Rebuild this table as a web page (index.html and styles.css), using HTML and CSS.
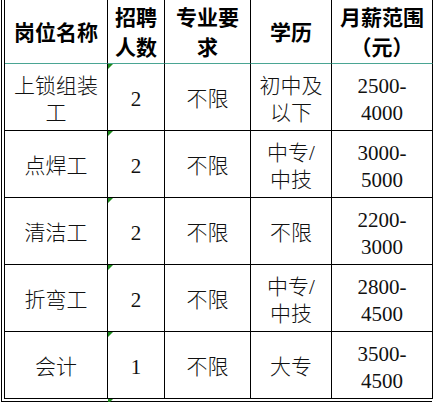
FILE: index.html
```html
<!DOCTYPE html>
<html lang="zh-CN">
<head>
<meta charset="utf-8">
<link rel="stylesheet" href="styles.css">
</head>
<body>
<div class="frame">
  <div class="grid">
    <div class="cell head">岗位名称</div>
    <div class="cell head">招聘<br>人数</div>
    <div class="cell head">专业要<br>求</div>
    <div class="cell head">学历</div>
    <div class="cell head">月薪范围<br>（元）</div>

    <div class="cell">上锁组装<br>工</div>
    <div class="cell mark">2</div>
    <div class="cell">不限</div>
    <div class="cell">初中及<br>以下</div>
    <div class="cell">2500-<br>4000</div>

    <div class="cell">点焊工</div>
    <div class="cell mark">2</div>
    <div class="cell">不限</div>
    <div class="cell">中专/<br>中技</div>
    <div class="cell">3000-<br>5000</div>

    <div class="cell">清洁工</div>
    <div class="cell mark">2</div>
    <div class="cell">不限</div>
    <div class="cell">不限</div>
    <div class="cell">2200-<br>3000</div>

    <div class="cell">折弯工</div>
    <div class="cell mark">2</div>
    <div class="cell">不限</div>
    <div class="cell">中专/<br>中技</div>
    <div class="cell">2800-<br>4500</div>

    <div class="cell">会计</div>
    <div class="cell mark">1</div>
    <div class="cell">不限</div>
    <div class="cell">大专</div>
    <div class="cell">3500-<br>4500</div>
  </div>
  <span class="tail-mark"></span>
</div>
</body>
</html>
```

FILE: styles.css
```css
html, body {
  margin: 0;
  padding: 0;
  background: #fff;
}

.frame {
  position: relative;
  margin-left: 1px;
  width: 431px;
  border-left: 1px solid #000;
  border-bottom: 1px solid #000;
  padding-left: 2px;
  padding-bottom: 2px;
  box-sizing: border-box;
}

.grid {
  display: grid;
  grid-template-columns: 103px 57px 86px 81px 101px;
  grid-template-rows: 64px repeat(5, 67px);
  border-left: 1px solid #000;
  font-family: "Liberation Serif", "Noto Sans CJK SC", serif;
  font-size: 21px;
  font-weight: 300;
  color: #111;
}

.cell {
  position: relative;
  display: flex;
  align-items: center;
  justify-content: center;
  text-align: center;
  line-height: 27px;
  padding: 5px 4px 0;
  box-sizing: border-box;
  border-right: 1px solid #000;
  border-bottom: 1px solid #000;
}

.head {
  font-weight: bold;
  color: #000;
  line-height: 30px;
  padding-top: 2px;
  border-bottom-color: #4aa593;
}

.mark::before {
  content: "";
  position: absolute;
  left: 0;
  top: 0;
  border-top: 5px solid #1d8a1d;
  border-right: 5px solid transparent;
}

.tail-mark {
  position: absolute;
  left: 106px;
  bottom: -3px;
  border-top: 5px solid #1d8a1d;
  border-right: 5px solid transparent;
}
```
